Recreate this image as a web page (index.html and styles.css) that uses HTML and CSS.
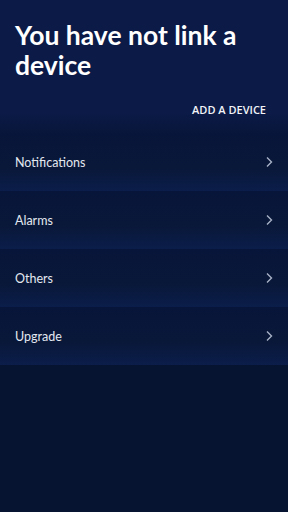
FILE: index.html
```html
<!DOCTYPE html>
<html lang="en">
<head>
<meta charset="utf-8"/>
<meta name="viewport" content="width=device-width, initial-scale=1.0"/>
<title>Devices</title>
<link rel="stylesheet" href="styles.css">
</head>
<body>
  <div class="header">
    <h1>You have not link a device</h1>
    <div class="actions">
      <button class="add-button">ADD A DEVICE</button>
    </div>
  </div>
  <ul class="menu">
    <li class="menu-item"><span>Notifications</span><svg class="chevron" viewBox="0 0 8 12"><path d="M2 1.5 L6.5 6 L2 10.5"/></svg></li>
    <li class="menu-item"><span>Alarms</span><svg class="chevron" viewBox="0 0 8 12"><path d="M2 1.5 L6.5 6 L2 10.5"/></svg></li>
    <li class="menu-item"><span>Others</span><svg class="chevron" viewBox="0 0 8 12"><path d="M2 1.5 L6.5 6 L2 10.5"/></svg></li>
    <li class="menu-item"><span>Upgrade</span><svg class="chevron" viewBox="0 0 8 12"><path d="M2 1.5 L6.5 6 L2 10.5"/></svg></li>
  </ul>
</body>
</html>
```
FILE: styles.css
```css
body {
  margin: 0;
  min-height: 100vh;
  font-family: 'Lato', 'Open Sans', sans-serif;
  background: #061331;
  color: #fff;
}
.header {
  background: linear-gradient(to bottom, #0b1a46 0%, #0b1a46 85%, #08163b 100%);
  padding: 20px 15px 0 15px;
  height: 113px;
}
h1 {
  margin: 0;
  font-size: 26.5px;
  line-height: 30px;
  font-weight: 700;
  width: 250px;
}
.actions {
  display: flex;
  justify-content: flex-end;
  margin-top: 22px;
}
.add-button {
  background: none;
  border: none;
  color: #f2f4f8;
  font-family: 'Open Sans', sans-serif;
  font-size: 11px;
  font-weight: 600;
  padding: 0 7px 0 0;
}
.menu {
  list-style: none;
  margin: 0;
  padding: 0;
}
.menu-item {
  height: 58px;
  display: flex;
  align-items: center;
  justify-content: space-between;
  padding: 0 15px;
  font-size: 12.5px;
  color: #e4e8f0;
  background: linear-gradient(to bottom, #08153a 0%, #091839 60%, #0b1d4a 100%);
}
.chevron {
  width: 8px;
  height: 12px;
  fill: none;
  stroke: #a8b2c8;
  stroke-width: 1.4;
}
```
